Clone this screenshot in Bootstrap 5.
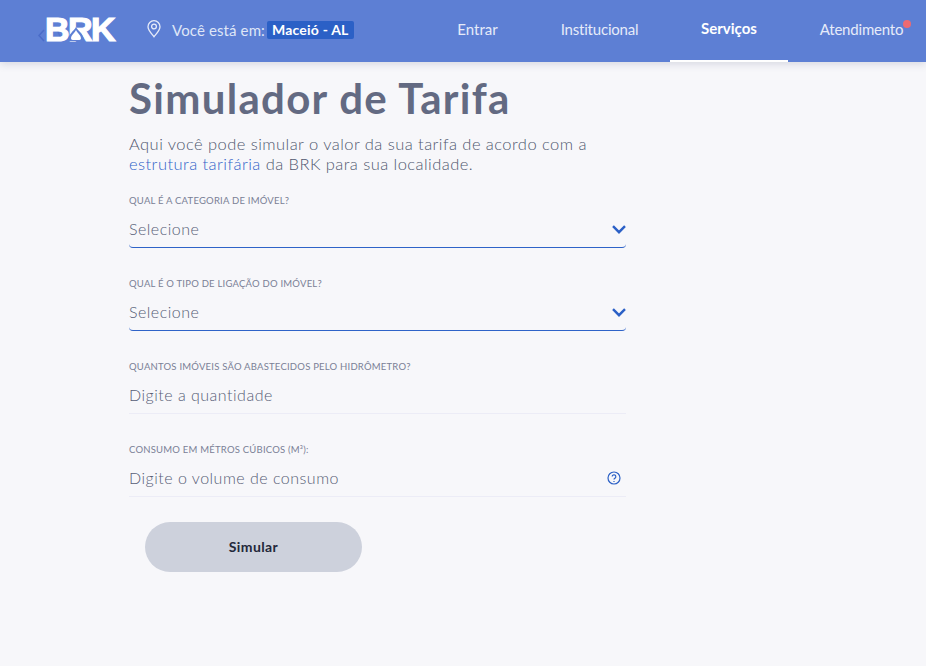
<!DOCTYPE html>
<html lang="pt-BR"><head><meta charset="utf-8"><title>Simulador de Tarifa</title>
<link href="https://cdn.jsdelivr.net/npm/bootstrap@5.3.0/dist/css/bootstrap.min.css" rel="stylesheet">
<style>
html,body{height:100%}
body{background:#f7f7fa;font-family:Lato,"Noto Sans",sans-serif;color:#666d85;overflow:hidden}
.topbar{height:62px;background:#5d7fd4;box-shadow:0 2px 8px rgba(60,70,110,.18);position:relative}
.brand-box{position:relative;width:70px;margin-left:46px;height:62px}
.brand-txt{position:absolute;left:-1px;top:10px;font:900 34px/38px "Liberation Sans",sans-serif;letter-spacing:-1.6px;color:#fff;-webkit-text-stroke:1.2px #fff}
.back-lnk{position:absolute;left:-8px;top:27px;font-size:12px;line-height:16px;color:#5273cb;white-space:nowrap;display:flex;align-items:center}
.back-lnk span{margin-left:12px}
.drop-ico{position:absolute;left:22px;top:27px}
.pin-ico{margin-left:31px;margin-top:-5px}
.loc-txt{color:#dfe6f7;font-size:15px;margin-left:11px;letter-spacing:.12px;margin-top:-2px}
.loc-tag{background:#2b60c6;color:#fff;font-weight:700;font-size:14px;line-height:18px;border-radius:2px;padding:0 5px;margin-left:2px;letter-spacing:.2px;margin-top:-2px}
.menu-lnk{display:flex;align-items:center;justify-content:center;height:62px;padding-bottom:4px;color:#e6ebf9;font-size:15px;text-decoration:none;position:relative}
.menu-a{width:39px;margin-left:auto;margin-right:64px}
.menu-b{width:77px;margin-right:32px;letter-spacing:-.2px}
.menu-c{width:118px;color:#fff;font-weight:700;border-bottom:2px solid #fff;margin-right:32px}
.menu-d{width:83px;margin-right:23px;letter-spacing:-.2px}
.red-dot{position:absolute;width:8px;height:8px;border-radius:50%;background:#ec6a72;right:-8px;top:20px}
.sim-wrap{width:497px;margin-left:129px}
.sim-title{font-size:42px;line-height:52px;font-weight:700;color:#636a82;margin:10px 0 0;letter-spacing:1.3px}
.sim-lead{font-size:16.5px;line-height:20px;margin:10px 0 0;font-weight:300;color:#50576f;letter-spacing:.45px}
.sim-lead a{color:#2f63c8;text-decoration:none}
.fld{height:83px;position:relative}
.fld-first{margin-top:16px}
.fld-lbl{font-size:9.5px;line-height:12px;color:#7a8096;text-transform:uppercase;display:block;letter-spacing:.22px;padding-top:5px;margin:0}
.fld-val{height:34px;padding-bottom:3px;display:flex;justify-content:space-between;align-items:center;font-size:16px;font-weight:300;color:#565d76;letter-spacing:.5px;border-bottom:1px solid #ececf6;margin-top:7px}
.fld-sel{border-bottom:1px solid #2f63c8;border-radius:0 0 4px 4px}
.help-ico{margin-right:5px}
.go-btn{width:217px;height:50px;margin:0 0 0 16px;border:0;border-radius:25px;background:#cdd1dc;color:#23283a;font-weight:700;font-size:14px;letter-spacing:.4px;padding-bottom:2px}
</style></head>
<body>
<header class="topbar d-flex align-items-center">
  <div class="brand-box flex-shrink-0">
    <a class="back-lnk text-decoration-none" href="#"><svg width="7" height="13" viewBox="0 0 7 13" fill="none" stroke="#4a6cc8" stroke-width="1.500" aria-hidden="true"><path d="M6 1 1 6.500l5 5.500"/></svg><span>Voltar</span></a>
    <div class="brand-txt">BRK</div>
    <svg class="drop-ico" width="16" height="14" viewBox="0 0 16 14" aria-hidden="true"><path d="M8 0C10 4 16 7 16 14H0C0 7 6 4 8 0Z" fill="#5d7fd4"/><path d="M8 3C9 6 13 8 13 11.500A2 2 0 0 1 11 13H5A2 2 0 0 1 3 11.500C3 8 7 6 8 3Z" fill="#fff"/></svg>
  </div>
  <svg class="pin-ico flex-shrink-0" width="14" height="18" viewBox="0 0 14 18" fill="none" stroke="#e6ebf9" stroke-width="1.300"><path d="M7 16.800C4 13 1 10 1 6.700a6 6 0 0 1 12 0C13 10 10 13 7 16.800Z"/><circle cx="7" cy="6.500" r="2.400"/></svg>
  <span class="loc-txt">Você está em:</span>
  <span class="loc-tag">Maceió - AL</span>
  <a class="menu-lnk menu-a" href="#">Entrar</a>
  <a class="menu-lnk menu-b" href="#">Institucional</a>
  <a class="menu-lnk menu-c" href="#">Serviços</a>
  <a class="menu-lnk menu-d" href="#">Atendimento<i class="red-dot"></i></a>
</header>
<main class="sim-wrap">
  <h1 class="sim-title">Simulador de Tarifa</h1>
  <p class="sim-lead">Aqui você pode simular o valor da sua tarifa de acordo com a<br><a href="#">estrutura tarifária</a> da BRK para sua localidade.</p>
  <div class="fld fld-first">
    <label class="fld-lbl">Qual é a categoria de imóvel?</label>
    <div class="fld-val fld-sel">Selecione
      <svg width="14" height="9" viewBox="0 0 14 9" fill="none" stroke="#2b60c6" stroke-width="2.400"><path d="M1 1.200l6 6 6-6"/></svg></div>
  </div>
  <div class="fld">
    <label class="fld-lbl">Qual é o tipo de ligação do imóvel?</label>
    <div class="fld-val fld-sel">Selecione
      <svg width="14" height="9" viewBox="0 0 14 9" fill="none" stroke="#2b60c6" stroke-width="2.400"><path d="M1 1.200l6 6 6-6"/></svg></div>
  </div>
  <div class="fld">
    <label class="fld-lbl">Quantos imóveis são abastecidos pelo hidrômetro?</label>
    <div class="fld-val">Digite a quantidade</div>
  </div>
  <div class="fld">
    <label class="fld-lbl">Consumo em métros cúbicos (m³):</label>
    <div class="fld-val">Digite o volume de consumo
      <svg class="help-ico" width="14" height="14" viewBox="0 0 14 14" fill="none" stroke="#2b60c6" stroke-width="1.200"><circle cx="7" cy="7" r="6"/><path d="M5.200 5.600a1.800 1.800 0 1 1 2.700 1.600c-.6.400-.9.700-.9 1.400"/><path d="M7 10v.9"/></svg></div>
  </div>
  <button class="go-btn d-block" type="button">Simular</button>
</main>
<script src="https://cdn.jsdelivr.net/npm/bootstrap@5.3.0/dist/js/bootstrap.bundle.min.js"></script>
</body></html>
